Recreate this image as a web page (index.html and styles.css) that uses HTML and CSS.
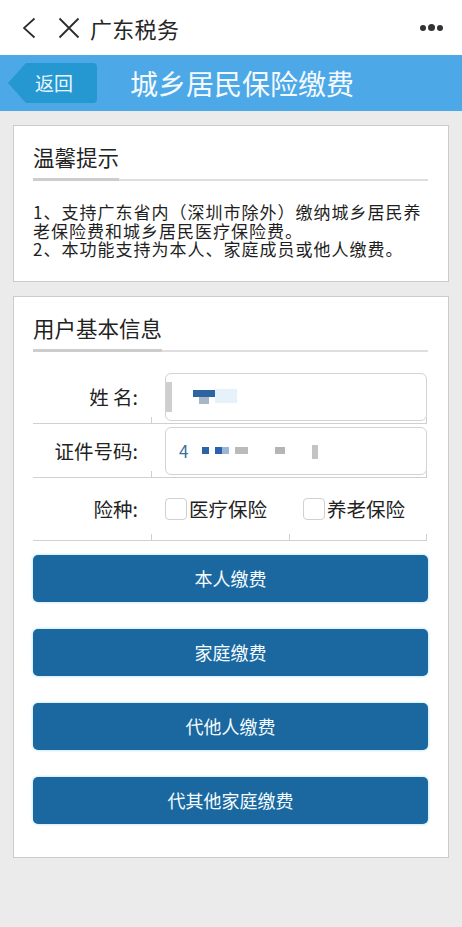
FILE: index.html
```html
<!DOCTYPE html>
<html lang="zh-CN">
<head>
<meta charset="utf-8">
<title>城乡居民保险缴费</title>
<link rel="stylesheet" href="styles.css">
</head>
<body>
<div class="topbar">
  <div class="nav-left">
    <svg class="ic-back" width="14" height="22" viewBox="0 0 14 22"><path d="M12.5 1.5 L2 11 L12.5 20.5" fill="none" stroke="#2b2b2b" stroke-width="1.7"/></svg>
    <svg class="ic-close" width="22" height="22" viewBox="0 0 22 22"><path d="M1.5 1.5 L20.5 20.5 M20.5 1.5 L1.5 20.5" fill="none" stroke="#2b2b2b" stroke-width="1.8"/></svg>
    <span class="app-title">广东税务</span>
  </div>
  <div class="more"><i></i><i class="big"></i><i></i></div>
</div>

<header class="header">
  <a class="back-btn">返回</a>
  <h1 class="page-title">城乡居民保险缴费</h1>
</header>

<main class="content">
  <section class="card tips">
    <div class="card-head"><span>温馨提示</span></div>
    <p>1、支持广东省内（深圳市除外）缴纳城乡居民养老保险费和城乡居民医疗保险费。</p>
    <p>2、本功能支持为本人、家庭成员或他人缴费。</p>
  </section>

  <section class="card info">
    <div class="card-head"><span>用户基本信息</span></div>
    <div class="form">
      <div class="cell label">姓 名:</div>
      <div class="cell field wide">
        <div class="input">
          <span class="mask m-bar"></span>
          <span class="mask m-a"></span>
          <span class="mask m-b"></span>
          <span class="mask m-c"></span>
        </div>
      </div>

      <div class="cell label">证件号码:</div>
      <div class="cell field wide">
        <div class="input">
          <span class="id-first">4</span>
          <span class="mask m-d"></span>
          <span class="mask m-e"></span>
          <span class="mask m-f"></span>
          <span class="mask m-g"></span>
          <span class="mask m-h"></span>
          <span class="mask m-i"></span>
        </div>
      </div>

      <div class="cell label tall">险种:</div>
      <div class="cell field tall"><span class="check"></span><span class="check-text">医疗保险</span></div>
      <div class="cell field tall last"><span class="check"></span><span class="check-text">养老保险</span></div>
    </div>

    <div class="buttons">
      <button class="btn">本人缴费</button>
      <button class="btn">家庭缴费</button>
      <button class="btn">代他人缴费</button>
      <button class="btn">代其他家庭缴费</button>
    </div>
  </section>
</main>
</body>
</html>
```

FILE: styles.css
```css
* { box-sizing: border-box; }

html, body {
  margin: 0;
  padding: 0;
}

body {
  width: 462px;
  min-height: 927px;
  background: #ebebeb;
  font-family: "Noto Sans CJK SC", "Noto Sans", "Liberation Sans", sans-serif;
  color: #222;
}

/* top bar */
.topbar {
  height: 55px;
  background: #fff;
  display: flex;
  align-items: center;
  justify-content: space-between;
  padding: 0 19px 0 22px;
}

.nav-left {
  display: flex;
  align-items: center;
}

.ic-back { display: block; }
.ic-close { display: block; margin-left: 22px; }

.app-title {
  margin-left: 10px;
  font-size: 22px;
  line-height: 28px;
  color: #262626;
  letter-spacing: 0.3px;
}

.more {
  display: flex;
  align-items: center;
  gap: 2px;
}

.more i {
  display: block;
  width: 6px;
  height: 6px;
  border-radius: 50%;
  background: #333;
}

.more i.big {
  width: 7px;
  height: 7px;
}

/* blue header */
.header {
  height: 56px;
  background: #4ca8e6;
  display: flex;
  align-items: center;
  padding-left: 8px;
}

.back-btn {
  width: 89px;
  height: 40px;
  background: #2598d1;
  color: #e9f6ff;
  font-size: 19px;
  line-height: 40px;
  padding-left: 27px;
  clip-path: polygon(18px 0, 100% 0, 100% 100%, 18px 100%, 0 50%);
  border-radius: 0 4px 4px 0;
  text-decoration: none;
}

.page-title {
  margin: 0 0 0 33px;
  font-size: 28px;
  font-weight: 400;
  color: #f4faff;
  line-height: 40px;
}

/* content */
.content {
  padding: 14px 13px 0;
}

.card {
  background: #fff;
  border: 1px solid #cbcbcb;
  padding: 17px 20px 0 19px;
}

.card + .card { margin-top: 14px; }

.card-head {
  display: flex;
  border-bottom: 2px solid #dedede;
}

.card-head span {
  font-size: 21.5px;
  line-height: 28px;
  padding-bottom: 7px;
  border-bottom: 3px solid #cdcdcd;
  margin-bottom: -2px;
  color: #222;
}

.tips { padding-bottom: 22px; }

.tips p {
  margin: 0;
  font-size: 17px;
  line-height: 18.5px;
  letter-spacing: 1px;
  color: #1f1f1f;
}

.tips .card-head { margin-bottom: 22px; }

/* form */
.form {
  margin-top: 18px;
  display: grid;
  grid-template-columns: 118px 138px 138px;
}

.cell {
  position: relative;
  border-bottom: 1px solid #d0d0d0;
  height: 54px;
  display: flex;
  align-items: center;
}

.cell.tall { height: 63px; }

.cell.wide { grid-column: 2 / span 2; }

.field::before {
  content: "";
  position: absolute;
  left: 0;
  bottom: 0;
  width: 1px;
  height: 6px;
  background: #cfcfcf;
}

.wide::after,
.last::after {
  content: "";
  position: absolute;
  right: 0;
  bottom: 0;
  width: 1px;
  height: 6px;
  background: #cfcfcf;
}

.label {
  justify-content: flex-end;
  padding-right: 13px;
  font-size: 19.5px;
  color: #222;
}

.field { padding-left: 14px; }

.input {
  position: relative;
  width: 262px;
  height: 48px;
  margin-top: 1px;
  border: 1px solid #d2d2d2;
  border-radius: 6px;
  background: #fff;
  display: flex;
  align-items: center;
  padding-left: 13px;
  overflow: hidden;
}

.id-first {
  font-size: 17px;
  color: #3f6f98;
  line-height: 20px;
}

.mask {
  position: absolute;
  display: block;
  filter: blur(0.6px);
}

.m-bar { left: 0; top: 8px; width: 6px; height: 30px; background: #cfcfcf; }
.m-a { left: 27px; top: 16px; width: 22px; height: 7px; background: #2d65a2; }
.m-b { left: 33px; top: 23px; width: 10px; height: 7px; background: #a9b6c6; }
.m-c { left: 49px; top: 15px; width: 22px; height: 14px; background: #e6f2fb; }

.m-d { left: 36px; top: 19px; width: 7px; height: 7px; background: #2b62a8; }
.m-e { left: 49px; top: 19px; width: 7px; height: 7px; background: #2d60b0; }
.m-f { left: 56px; top: 19px; width: 7px; height: 7px; background: #9cb7d6; }
.m-g { left: 69px; top: 19px; width: 13px; height: 7px; background: #bbbbbb; }
.m-h { left: 109px; top: 19px; width: 10px; height: 7px; background: #b5b5b5; }
.m-i { left: 146px; top: 17px; width: 6px; height: 14px; background: #c4c4c4; }

.check {
  width: 22px;
  height: 22px;
  border: 1px solid #d0d0d0;
  border-radius: 4px;
  background: #fff;
  flex: none;
}

.check-text {
  margin-left: 2px;
  font-size: 19.5px;
  color: #222;
}

/* buttons */
.buttons {
  display: flex;
  flex-direction: column;
  gap: 27px;
  padding: 14px 0 33px;
}

.btn {
  height: 47px;
  border: none;
  border-radius: 5px;
  background: #1a689f;
  color: #f4fbff;
  font-family: inherit;
  font-size: 18px;
  box-shadow: 0 0 3px rgba(110, 200, 245, 0.7);
}
```
